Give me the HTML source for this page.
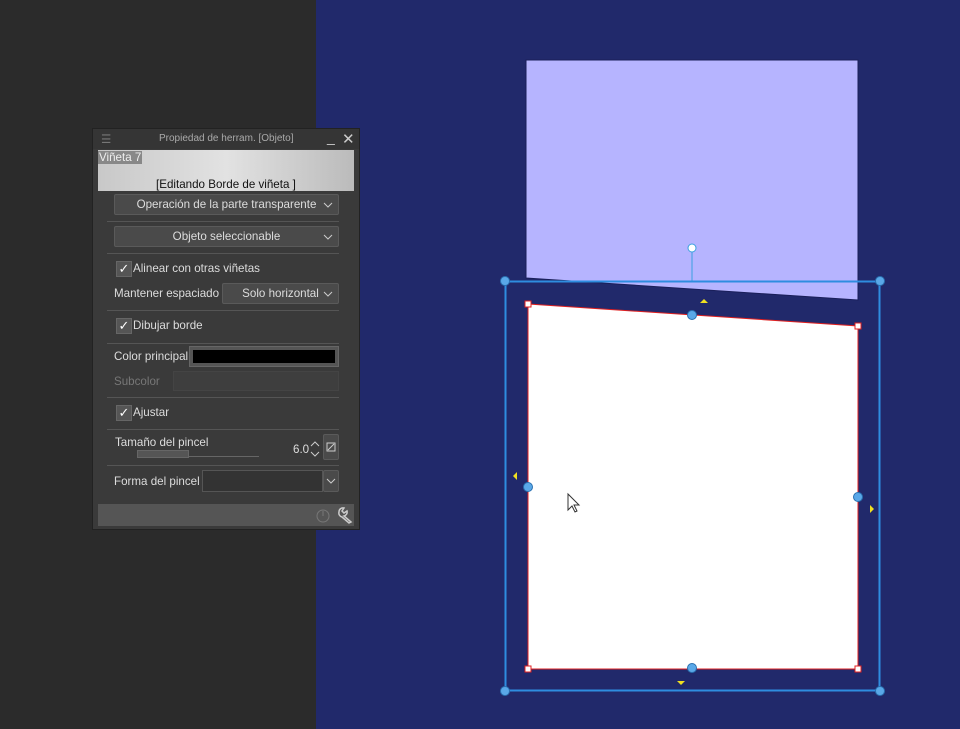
<!DOCTYPE html><html><head><style>
body{margin:0;width:960px;height:729px;overflow:hidden;background:#21296b;font-family:"Liberation Sans",sans-serif;position:relative}
.left{position:absolute;left:0;top:0;width:316px;height:729px;background:#2b2b2b}
.p{position:absolute;left:92px;top:128px;width:268px;height:402px;background:#3a3a3a;border:1px solid #222;box-sizing:border-box}
.t{position:absolute;color:#ddd;font-size:11.6px;white-space:nowrap}
.btn{position:absolute;background:#4a4a4a;border:1px solid #5a5a5a;border-radius:2px;color:#ddd;font-size:11.6px;text-align:center;box-sizing:border-box}
.sep{position:absolute;left:14px;width:232px;height:1px;background:#555}
.cb{position:absolute;width:14px;height:14px;background:#555;border:1px solid #666;color:#fff;font-size:13px;line-height:14px;text-align:center}
.ch{position:absolute;right:5px;top:50%;margin-top:-3px}
</style></head><body>
<div class="left"></div>
<div class="p">
<div style="position:absolute;left:0;top:0;width:266px;height:20px;background:#353535"></div>
<div class="t" style="left:8px;top:3px;color:#777">☰</div>
<div class="t" style="left:66px;top:4px;font-size:10px;color:#aaa">Propiedad de herram. [Objeto]</div>
<div class="t" style="left:234px;top:0px;color:#ccc;font-size:14px">_</div>
<div class="t" style="left:249px;top:1px;color:#ccc;font-size:15px">✕</div>
<div style="position:absolute;left:5px;top:21px;width:256px;height:41px;background:linear-gradient(90deg,#c8c8c8,#e2e2e2 50%,#bbb)"></div>
<div class="t" style="left:5px;top:22px;background:#888;color:#eee;padding:0 1px">Viñeta 7</div>
<div class="t" style="left:63px;top:49px;color:#111">[Editando Borde de viñeta ]</div>
<div class="btn" style="left:21px;top:65px;width:225px;height:21px;line-height:19px">Operación de la parte transparente<svg class="ch" width="10" height="6"><path d="M1 1L5 5L9 1" stroke="#ccc" fill="none"/></svg></div>
<div class="sep" style="top:92px"></div>
<div class="btn" style="left:21px;top:97px;width:225px;height:21px;line-height:19px">Objeto seleccionable<svg class="ch" width="10" height="6"><path d="M1 1L5 5L9 1" stroke="#ccc" fill="none"/></svg></div>
<div class="sep" style="top:124px"></div>
<div class="cb" style="left:23px;top:132px">✓</div><div class="t" style="left:40px;top:133px">Alinear con otras viñetas</div>
<div class="t" style="left:21px;top:158px">Mantener espaciado</div>
<div class="btn" style="left:129px;top:154px;width:117px;height:21px;line-height:19px">Solo horizontal<svg class="ch" width="10" height="6"><path d="M1 1L5 5L9 1" stroke="#ccc" fill="none"/></svg></div>
<div class="sep" style="top:181px"></div>
<div class="cb" style="left:23px;top:189px">✓</div><div class="t" style="left:40px;top:190px">Dibujar borde</div>
<div class="sep" style="top:214px"></div>
<div class="t" style="left:21px;top:221px">Color principal</div>
<div style="position:absolute;left:96px;top:217px;width:150px;height:21px;background:#555;border:1px solid #666;box-sizing:border-box"><div style="margin:3px;height:13px;background:#000"></div></div>
<div class="t" style="left:21px;top:246px;color:#777">Subcolor</div>
<div style="position:absolute;left:80px;top:242px;width:166px;height:20px;background:#3e3e3e;border:1px solid #444;box-sizing:border-box"></div>
<div class="sep" style="top:268px"></div>
<div class="cb" style="left:23px;top:276px">✓</div><div class="t" style="left:40px;top:277px">Ajustar</div>
<div class="sep" style="top:300px"></div>
<div class="t" style="left:22px;top:307px">Tamaño del pincel</div>
<div style="position:absolute;left:44px;top:322px;width:122px;height:5px;border-bottom:1px solid #666"></div>
<div style="position:absolute;left:44px;top:321px;width:50px;height:6px;background:#555;border:1px solid #666"></div>
<div class="t" style="left:200px;top:314px">6.0</div>
<svg style="position:absolute;left:217px;top:311px" width="10" height="18"><path d="M1 6L5 2L9 6M1 12L5 16L9 12" stroke="#ccc" fill="none"/></svg>
<div class="btn" style="left:230px;top:305px;width:16px;height:26px"><svg width="10" height="10" style="margin-top:7px"><rect x="1" y="1" width="8" height="8" fill="none" stroke="#ccc"/><path d="M2 8L8 2" stroke="#ccc"/></svg></div>
<div class="sep" style="top:336px"></div>
<div class="t" style="left:21px;top:346px">Forma del pincel</div>
<div style="position:absolute;left:109px;top:341px;width:121px;height:22px;background:#333;border:1px solid #555;box-sizing:border-box"></div>
<div class="btn" style="left:230px;top:341px;width:16px;height:22px"><svg class="ch" width="10" height="6" style="right:2px"><path d="M1 1L5 5L9 1" stroke="#ccc" fill="none"/></svg></div>
<div style="position:absolute;left:5px;top:375px;width:256px;height:22px;background:#555"></div>
<svg style="position:absolute;left:222px;top:379px" width="16" height="16"><circle cx="8" cy="8" r="6" fill="none" stroke="#777"/><path d="M8 3V8" stroke="#777"/></svg>
<svg style="position:absolute;left:243px;top:377px" width="18" height="18"><path d="M3 6A4 4 0 0 1 8 2L6 5L8 7L11 5A4 4 0 0 1 8 10L15 16L13 17L6 11A4 4 0 0 1 3 6Z" fill="none" stroke="#ccc" stroke-width="1.5"/></svg>
</div>
<svg width="960" height="729" style="position:absolute;left:0;top:0">
<polygon points="526,60 858,60 858,300 526,278" fill="#b6b4ff" stroke="#1a1f5a"/>
<line x1="692" y1="248" x2="692" y2="281" stroke="#3aa0e0"/>
<circle cx="692" cy="248" r="4" fill="#fff" stroke="#3aa0e0"/>
<rect x="505.5" y="281.5" width="374" height="409" fill="none" stroke="#2e8de0" stroke-width="2"/>
<polygon points="528,304 858,326 858,669 528,669" fill="#fff" stroke="#e02020"/>
<g fill="#fff" stroke="#e02020"><rect x="525" y="301" width="6" height="6"/><rect x="855" y="323" width="6" height="6"/><rect x="525" y="666" width="6" height="6"/><rect x="855" y="666" width="6" height="6"/></g>
<g fill="#5aa8e8" stroke="#2a70b0"><circle cx="505" cy="281" r="4.5"/><circle cx="880" cy="281" r="4.5"/><circle cx="505" cy="691" r="4.5"/><circle cx="880" cy="691" r="4.5"/><circle cx="692" cy="315" r="4.5"/><circle cx="692" cy="668" r="4.5"/><circle cx="528" cy="487" r="4.5"/><circle cx="858" cy="497" r="4.5"/></g>
<g fill="#f0e020"><polygon points="700,303 708,303 704,299"/><polygon points="677,681 685,681 681,685"/><polygon points="517,472 517,480 513,476"/><polygon points="870,505 870,513 874,509"/></g>
<polygon points="568,494 568,510 572,506 575,512 577,511 574,505 579,505" fill="#fff" stroke="#333"/>
</svg>
</body></html>
